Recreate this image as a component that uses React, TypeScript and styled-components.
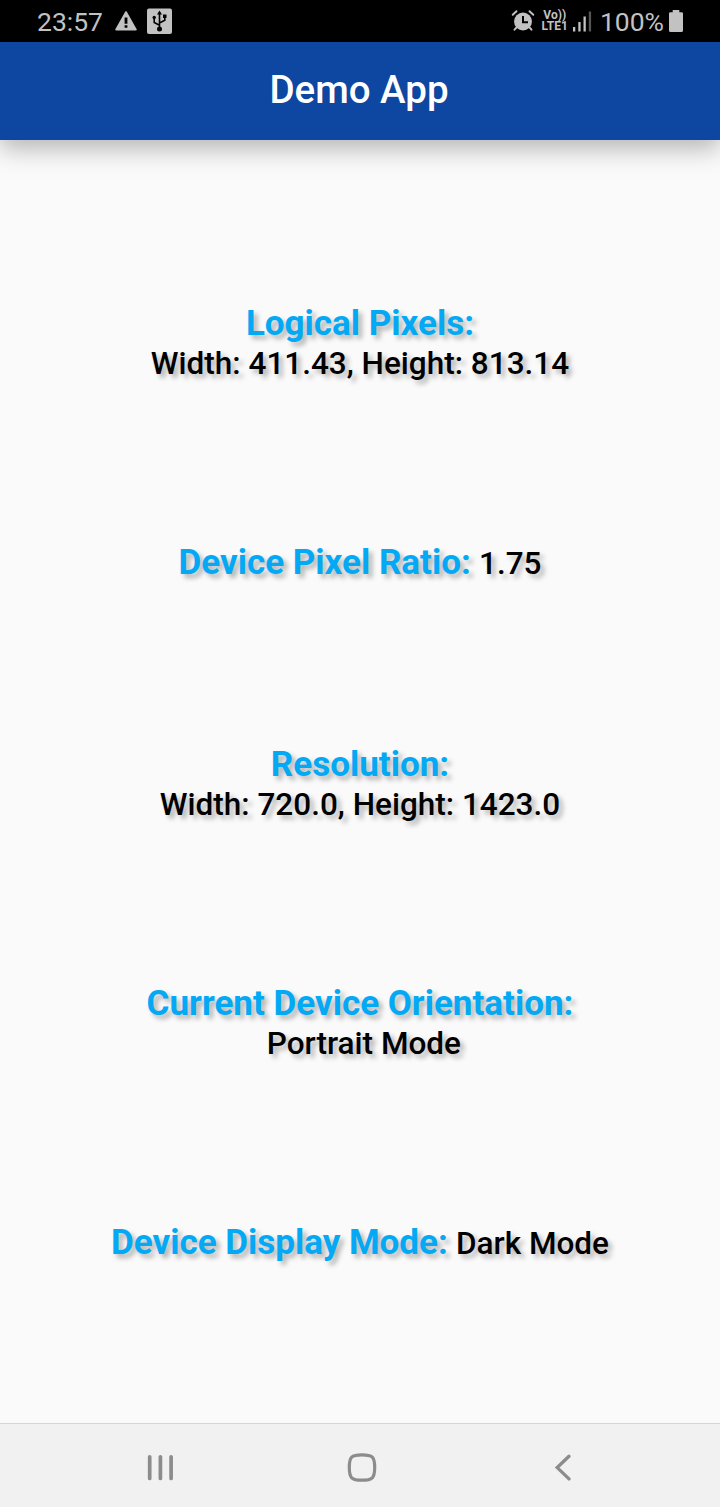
import React from 'react';
import styled, { createGlobalStyle } from 'styled-components';

const GlobalStyle = createGlobalStyle`
  * { box-sizing: border-box; }
  body { margin: 0; background: #fafafa; font-family: Roboto, sans-serif; }
`;

const Screen = styled.div`
  display: flex;
  flex-direction: column;
  width: 720px;
  height: 1507px;
  overflow: hidden;
  background: #fafafa;
`;

const StatusBar = styled.header`
  display: flex;
  align-items: center;
  justify-content: space-between;
  flex: 0 0 42px;
  padding: 0 37px;
  background: #000;
  color: #c2c2c2;
  z-index: 1;
`;

const StatusGroup = styled.div`
  display: flex;
  align-items: center;
  height: 42px;
`;

const StatusText = styled.span`
  font-size: 26.5px;
  line-height: 42px;
  padding-top: 2px;
`;

const Icon = styled.svg<{ $left?: number }>`
  display: block;
  flex: none;
  margin-left: ${(p) => p.$left ?? 0}px;
`;

const Network = styled.div`
  display: flex;
  flex-direction: column;
  align-items: center;
  width: 27px;
  margin: 0 0 0 6px;
  font-size: 12px;
  font-weight: 700;
  line-height: 11.5px;
  white-space: nowrap;
`;

const AppBar = styled.div`
  display: flex;
  align-items: center;
  justify-content: center;
  flex: 0 0 98px;
  padding: 0 2px 2px 0;
  background: #0d47a1;
  color: #fff;
  box-shadow: 0 8px 24px rgba(0, 0, 0, 0.29);
`;

const Title = styled.h1`
  margin: 0;
  font-size: 38.5px;
  font-weight: 500;
  line-height: 46px;
`;

const Content = styled.main`
  display: flex;
  flex: 1;
  flex-direction: column;
  align-items: center;
  justify-content: space-evenly;
  padding-top: 0.9px;
`;

const Info = styled.p<{ $stacked?: boolean }>`
  display: flex;
  flex-direction: ${(p) => (p.$stacked ? 'column' : 'row')};
  align-items: ${(p) => (p.$stacked ? 'center' : 'baseline')};
  gap: ${(p) => (p.$stacked ? 0 : 8.2)}px;
  height: ${(p) => (p.$stacked ? 78 : 41)}px;
  margin: 0;
  white-space: pre;
  text-shadow: 4px 4px 5px rgba(0, 0, 0, 0.29);
`;

const Label = styled.span`
  color: #03a9f4;
  font-size: 35px;
  font-weight: 700;
  line-height: 43px;
`;

const Value = styled.span`
  color: #000;
  font-size: 31.5px;
  font-weight: 500;
  line-height: 37px;
`;

const NavBar = styled.nav`
  display: flex;
  align-items: center;
  justify-content: space-between;
  flex: 0 0 84px;
  padding: 4px 147px 0 146px;
  border-top: 1px solid #d5d5d5;
  background: #f1f1f1;
`;

const entries = [
  { label: 'Logical Pixels:', value: 'Width: 411.43, Height: 813.14', stacked: true },
  { label: 'Device Pixel Ratio:', value: '1.75', stacked: false },
  { label: 'Resolution:', value: 'Width: 720.0, Height: 1423.0', stacked: true },
  { label: 'Current Device Orientation:', value: ' Portrait Mode', stacked: true },
  { label: 'Device Display Mode:', value: 'Dark Mode', stacked: false },
];

const WarningIcon = () => (
  <Icon $left={11} width="24" height="22" viewBox="0 0 24 22">
    <path d="M12 2 22 19.6H2Z" fill="#c2c2c2" stroke="#c2c2c2" strokeWidth="1.6" strokeLinejoin="round" />
    <path d="M10.6 7.5h2.8v6.2h-2.8zM10.6 15.3h2.8v2.5h-2.8z" fill="#000" />
  </Icon>
);

const UsbIcon = () => (
  <Icon $left={9} width="25" height="26" viewBox="0 0 25 26">
    <rect width="25" height="25.5" y="0.4" rx="2" fill="#c2c2c2" />
    <path d="M12.5 5v16M12.5 17.2 7.2 14.5V10M12.5 15 17.8 12.3V9" fill="none" stroke="#000" strokeWidth="1.6" />
    <path d="m12.5 2.5 2.5 4h-5z" fill="#000" />
    <circle cx="7.2" cy="9.5" r="1.7" fill="#000" />
    <path d="M16 6.5h3.5V10H16z" fill="#000" />
    <circle cx="12.5" cy="21" r="2.5" fill="#000" />
  </Icon>
);

const AlarmIcon = () => (
  <Icon width="24" height="24" viewBox="0 0 24 24">
    <circle cx="12" cy="12.5" r="9" fill="#c2c2c2" />
    <path d="M1.7 5.8 5.5 2.2M22.3 5.8 18.5 2.2M5.5 18.5 3.5 20.7M18.5 18.5l2 2.2" stroke="#c2c2c2" strokeWidth="1.9" strokeLinecap="round" />
    <path d="M12 7v6.2h5" fill="none" stroke="#000" strokeWidth="2" />
  </Icon>
);

const SignalIcon = () => (
  <Icon $left={5} width="19" height="21" viewBox="0 0 19 21">
    <path d="M0 16h2.3v4.5H0zM5.3 11h2.3v9.5H5.3zM10.5 5.5h2.3v15h-2.3z" fill="#c2c2c2" />
    <path d="M15.8 .5h2.3v20h-2.3z" fill="#555" />
  </Icon>
);

const BatteryIcon = () => (
  <Icon $left={5} width="14" height="23" viewBox="0 0 14 23">
    <path d="M3.7 0h6.6v2.3h2.3A1.3 1.3 0 0 1 14 3.6v16.9a1.5 1.5 0 0 1-1.5 1.5h-11A1.5 1.5 0 0 1 0 20.5V3.6a1.3 1.3 0 0 1 1.4-1.3h2.3Z" fill="#c2c2c2" />
  </Icon>
);

export default function App() {
  return (
    <>
      <GlobalStyle />
      <Screen>
        <StatusBar>
          <StatusGroup>
            <StatusText>23:57</StatusText>
            <WarningIcon />
            <UsbIcon />
          </StatusGroup>
          <StatusGroup>
            <AlarmIcon />
            <Network>
              <span>Vo))</span>
              <span>LTE1</span>
            </Network>
            <SignalIcon />
            <Icon width="7.7" height="1" />
            <StatusText>100%</StatusText>
            <BatteryIcon />
          </StatusGroup>
        </StatusBar>
        <AppBar>
          <Title>Demo App</Title>
        </AppBar>
        <Content>
          {entries.map((entry) => (
            <Info key={entry.label} $stacked={entry.stacked}>
              <Label>{entry.label}</Label>
              <Value>{entry.value}</Value>
            </Info>
          ))}
        </Content>
        <NavBar>
          <Icon width="28" height="28" viewBox="0 0 28 28">
            <path d="M3.7 2.8v21.6M14.4 2.8v21.6M25.1 2.8v21.6" stroke="#8c8c8c" strokeWidth="3.7" strokeLinecap="round" />
          </Icon>
          <Icon width="34" height="30" viewBox="0 0 34 30">
            <path d="M15 1.8c10.5 0 12.7 2.2 12.7 12.7S25.5 27.2 15 27.2 2.3 25 2.3 14.5 4.500 1.800 15 1.800Z" fill="none" stroke="#8c8c8c" strokeWidth="3.2" />
          </Icon>
          <Icon width="20" height="28" viewBox="0 0 20 28">
            <path d="M16 2.300 4.200 13.600l11.800 11.300" fill="none" stroke="#8c8c8c" strokeWidth="3.300" strokeLinecap="round" />
          </Icon>
        </NavBar>
      </Screen>
    </>
  );
}
